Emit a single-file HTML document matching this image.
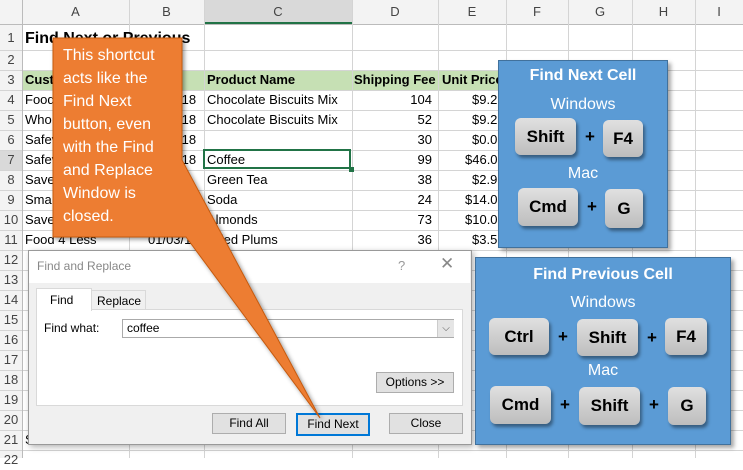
<!DOCTYPE html><html><head><style>
body{margin:0;width:743px;height:458px;overflow:hidden;background:#fff;font-family:"Liberation Sans",sans-serif;position:relative}
.a{position:absolute}
.hl{position:absolute;left:0;width:743px;height:1px;background:#d4d4d4}
.vl{position:absolute;top:0;width:1px;height:458px;background:#d4d4d4}
.t{position:absolute;font-size:13px;color:#000;white-space:nowrap;line-height:20px}
.rn{position:absolute;left:0;width:22px;text-align:center;font-size:13px;color:#444;line-height:20px}
.ch{position:absolute;top:0;height:24px;line-height:24px;text-align:center;font-size:13px;color:#444}
.box{position:absolute;background:#5b9bd5;border:1px solid #41719c;box-shadow:3px 3px 4px rgba(0,0,0,.35);color:#fff;text-align:center}
.k{position:absolute;background:linear-gradient(#e0e0e0,#bdbdbd);border-radius:6px;box-shadow:2px 3px 3px rgba(0,0,0,.4);color:#000;font-weight:bold;font-size:17px;text-align:center}
.p{position:absolute;color:#000;font-weight:bold;font-size:17px}
.btn{position:absolute;background:#e1e1e1;border:1px solid #adadad;font-size:12px;text-align:center;line-height:19px;color:#000}
</style></head><body>
<div class="a" style="left:0;top:0;width:743px;height:24px;background:#f3f3f3"></div>
<div class="a" style="left:0;top:0;width:22px;height:458px;background:#f3f3f3"></div>
<div class="a" style="left:204px;top:0;width:148px;height:24px;background:#d9d9d9;border-bottom:2px solid #217346;box-sizing:border-box"></div>
<div class="a" style="left:0;top:150px;width:22px;height:20px;background:#d9d9d9"></div>
<div class="a" style="left:22px;top:70px;width:476px;height:20px;background:#c6e0b4"></div>
<div class="hl" style="top:24px;background:#bbb"></div>
<div class="hl" style="top:50px"></div><div class="hl" style="top:70px"></div><div class="hl" style="top:90px"></div><div class="hl" style="top:110px"></div><div class="hl" style="top:130px"></div><div class="hl" style="top:150px"></div><div class="hl" style="top:170px"></div><div class="hl" style="top:190px"></div><div class="hl" style="top:210px"></div><div class="hl" style="top:230px"></div><div class="hl" style="top:250px"></div><div class="hl" style="top:270px"></div><div class="hl" style="top:290px"></div><div class="hl" style="top:310px"></div><div class="hl" style="top:330px"></div><div class="hl" style="top:350px"></div><div class="hl" style="top:370px"></div><div class="hl" style="top:390px"></div><div class="hl" style="top:410px"></div><div class="hl" style="top:430px"></div><div class="hl" style="top:450px"></div>
<div class="vl" style="left:22px;background:#bbb"></div><div class="vl" style="left:129px"></div><div class="vl" style="left:204px"></div><div class="vl" style="left:352px"></div><div class="vl" style="left:438px"></div><div class="vl" style="left:506px"></div><div class="vl" style="left:568px"></div><div class="vl" style="left:632px"></div><div class="vl" style="left:695px"></div>
<div class="ch" style="left:22px;width:107px">A</div><div class="ch" style="left:129px;width:75px">B</div><div class="ch" style="left:204px;width:148px">C</div><div class="ch" style="left:352px;width:86px">D</div><div class="ch" style="left:438px;width:68px">E</div><div class="ch" style="left:506px;width:62px">F</div><div class="ch" style="left:568px;width:64px">G</div><div class="ch" style="left:632px;width:63px">H</div><div class="ch" style="left:695px;width:48px">I</div>
<div class="rn" style="top:28px">1</div><div class="rn" style="top:50px">2</div><div class="rn" style="top:70px">3</div><div class="rn" style="top:90px">4</div><div class="rn" style="top:110px">5</div><div class="rn" style="top:130px">6</div><div class="rn" style="top:150px">7</div><div class="rn" style="top:170px">8</div><div class="rn" style="top:190px">9</div><div class="rn" style="top:210px">10</div><div class="rn" style="top:230px">11</div><div class="rn" style="top:250px">12</div><div class="rn" style="top:270px">13</div><div class="rn" style="top:290px">14</div><div class="rn" style="top:310px">15</div><div class="rn" style="top:330px">16</div><div class="rn" style="top:350px">17</div><div class="rn" style="top:370px">18</div><div class="rn" style="top:390px">19</div><div class="rn" style="top:410px">20</div><div class="rn" style="top:430px">21</div><div class="rn" style="top:450px">22</div>
<div class="t" style="left:25px;top:29px;font-size:16px;font-weight:bold">Find Next or Previous</div>
<div class="t" style="left:25px;top:70px;font-weight:bold">Customer</div><div class="t" style="left:150px;top:70px;font-weight:bold">Date</div>
<div class="t" style="left:207px;top:70px;font-weight:bold">Product Name</div><div class="t" style="left:354px;top:70px;font-weight:bold">Shipping Fee</div><div class="t" style="left:442px;top:70px;font-weight:bold">Unit Price</div>
<div class="t" style="left:25px;top:90px">Food</div><div class="t" style="left:25px;top:110px">Whol</div><div class="t" style="left:25px;top:130px">Safew</div><div class="t" style="left:25px;top:150px">Safew</div><div class="t" style="left:25px;top:170px">Save</div><div class="t" style="left:25px;top:190px">Smar</div><div class="t" style="left:25px;top:210px">Save</div><div class="t" style="left:25px;top:230px">Food 4 Less</div><div class="t" style="left:25px;top:430px">Stater Bros</div>
<div class="t" style="left:178px;top:90px">/18</div><div class="t" style="left:178px;top:110px">/18</div><div class="t" style="left:178px;top:130px">/18</div><div class="t" style="left:178px;top:150px">/18</div><div class="t" style="left:148px;top:230px">01/03/18</div>
<div class="t" style="left:207px;top:90px">Chocolate Biscuits Mix</div><div class="t" style="left:207px;top:110px">Chocolate Biscuits Mix</div><div class="t" style="left:207px;top:150px">Coffee</div><div class="t" style="left:207px;top:170px">Green Tea</div><div class="t" style="left:207px;top:190px">Soda</div><div class="t" style="left:207px;top:210px">Almonds</div><div class="t" style="left:207px;top:230px">Dried Plums</div>
<div class="t" style="left:352px;width:80px;text-align:right;top:90px">104</div><div class="t" style="left:352px;width:80px;text-align:right;top:110px">52</div><div class="t" style="left:352px;width:80px;text-align:right;top:130px">30</div><div class="t" style="left:352px;width:80px;text-align:right;top:150px">99</div><div class="t" style="left:352px;width:80px;text-align:right;top:170px">38</div><div class="t" style="left:352px;width:80px;text-align:right;top:190px">24</div><div class="t" style="left:352px;width:80px;text-align:right;top:210px">73</div><div class="t" style="left:352px;width:80px;text-align:right;top:230px">36</div>
<div class="t" style="left:472px;top:90px">$9.2</div><div class="t" style="left:472px;top:110px">$9.2</div><div class="t" style="left:472px;top:130px">$0.0</div><div class="t" style="left:465px;top:150px">$46.0</div><div class="t" style="left:472px;top:170px">$2.9</div><div class="t" style="left:465px;top:190px">$14.0</div><div class="t" style="left:465px;top:210px">$10.0</div><div class="t" style="left:472px;top:230px">$3.5</div>
<div class="a" style="left:203px;top:149px;width:148px;height:20px;border:2px solid #217346;box-sizing:border-box"></div>
<div class="a" style="left:349px;top:167px;width:5px;height:5px;background:#217346"></div>
<!-- dialog -->
<div class="a" style="left:28px;top:250px;width:442px;height:193px;background:#f0f0f0;border:1px solid #999;box-shadow:2px 2px 6px rgba(0,0,0,.3)"></div>
<div class="a" style="left:29px;top:251px;width:441px;height:32px;background:#fff"></div>
<div class="t" style="left:37px;top:256px;color:#888;font-size:12px">Find and Replace</div>
<div class="t" style="left:398px;top:256px;color:#999">?</div>
<div class="t" style="left:440px;top:254px;color:#888;font-size:17px">✕</div>
<div class="a" style="left:36px;top:309px;width:425px;height:95px;background:#fff;border:1px solid #d9d9d9"></div>
<div class="a" style="left:36px;top:288px;width:54px;height:22px;background:#fff;border:1px solid #d9d9d9;border-bottom:none"></div>
<div class="a" style="left:91px;top:290px;width:53px;height:19px;border:1px solid #d9d9d9;border-bottom:none"></div>
<div class="t" style="left:50px;top:290px;font-size:12px">Find</div><div class="t" style="left:97px;top:291px;font-size:12px">Replace</div>
<div class="t" style="left:44px;top:318px;font-size:12px">Find what:</div>
<div class="a" style="left:122px;top:319px;width:332px;height:19px;background:#fff;border:1px solid #aaa;box-sizing:border-box"></div>
<div class="t" style="left:127px;top:318px;font-size:12px">coffee</div>
<div class="a" style="left:437px;top:320px;width:16px;height:17px;background:#e5e5e5;border-left:1px solid #ccc;font-size:10px;text-align:center;line-height:17px;color:#555">⌵</div>
<div class="btn" style="left:376px;top:372px;width:76px">Options &gt;&gt;</div>
<div class="btn" style="left:212px;top:413px;width:72px">Find All</div>
<div class="btn" style="left:296px;top:413px;width:70px;border:2px solid #0078d7">Find Next</div>
<div class="btn" style="left:389px;top:413px;width:72px">Close</div>
<!-- callout -->
<svg class="a" style="left:0;top:0" width="743" height="458"><defs><filter id="s"><feDropShadow dx="2" dy="2" stdDeviation="2" flood-opacity=".4"/></filter></defs>
<path d="M53 38H182V160L320 418L186 237H53Z" fill="#ed7d31" stroke="#c55a11" stroke-width="1" filter="url(#s)"/></svg>
<div class="a" style="left:63px;top:44px;color:#fff;font-size:16px;line-height:23px">This shortcut<br>acts like the<br>Find Next<br>button, even<br>with the Find<br>and Replace<br>Window is<br>closed.</div>
<!-- box 1 -->
<div class="box" style="left:498px;top:60px;width:168px;height:186px">
<div class="a" style="left:0;width:168px;top:6px;font-weight:bold;font-size:16px">Find Next Cell</div>
<div class="a" style="left:0;width:168px;top:35px;font-size:16px">Windows</div>
<div class="a" style="left:0;width:168px;top:104px;font-size:16px">Mac</div></div>
<div class="k" style="left:515px;top:118px;width:61px;height:37px;line-height:37px">Shift</div><div class="p" style="left:585px;top:127px">+</div><div class="k" style="left:603px;top:120px;width:40px;height:37px;line-height:37px">F4</div>
<div class="k" style="left:518px;top:188px;width:60px;height:38px;line-height:38px">Cmd</div><div class="p" style="left:587px;top:197px">+</div><div class="k" style="left:605px;top:189px;width:38px;height:39px;line-height:39px">G</div>
<!-- box 2 -->
<div class="box" style="left:475px;top:257px;width:254px;height:186px">
<div class="a" style="left:0;width:254px;top:8px;font-weight:bold;font-size:16px">Find Previous Cell</div>
<div class="a" style="left:0;width:254px;top:36px;font-size:16px">Windows</div>
<div class="a" style="left:0;width:254px;top:104px;font-size:16px">Mac</div></div>
<div class="k" style="left:489px;top:318px;width:60px;height:37px;line-height:37px">Ctrl</div><div class="p" style="left:558px;top:327px">+</div><div class="k" style="left:577px;top:319px;width:61px;height:37px;line-height:37px">Shift</div><div class="p" style="left:647px;top:328px">+</div><div class="k" style="left:665px;top:318px;width:42px;height:37px;line-height:37px">F4</div>
<div class="k" style="left:490px;top:386px;width:61px;height:38px;line-height:38px">Cmd</div><div class="p" style="left:560px;top:395px">+</div><div class="k" style="left:579px;top:387px;width:61px;height:38px;line-height:38px">Shift</div><div class="p" style="left:649px;top:395px">+</div><div class="k" style="left:668px;top:387px;width:38px;height:38px;line-height:38px">G</div>
</body></html>
